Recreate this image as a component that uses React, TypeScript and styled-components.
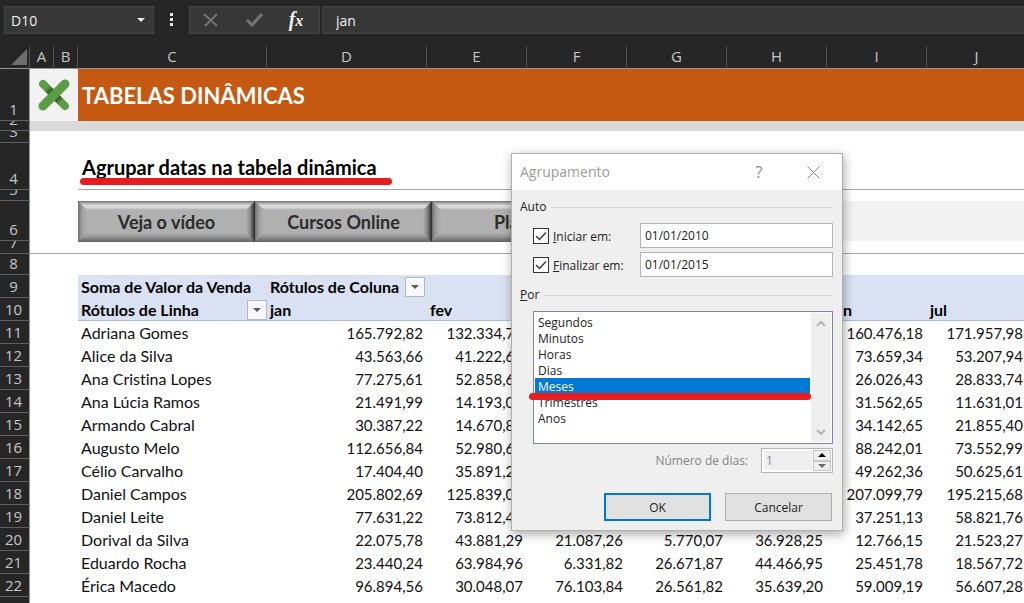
import React, { useState } from "react";
import styled, { createGlobalStyle, css } from "styled-components";

const GlobalStyle = createGlobalStyle`
  *, *::before, *::after { box-sizing: border-box; }
  html, body, #root { height: 100%; }
  body {
    margin: 0;
    overflow: hidden;
    background: #ffffff;
    font-family: Lato, "Liberation Sans", sans-serif;
    font-variant-ligatures: none;
  }
  button, input, select { font: inherit; color: inherit; margin: 0; border-radius: 0; }
`;

const uiFont = css`font-family: "Open Sans", "Noto Sans", sans-serif;`;

const Screen = styled.div`
  position: relative;
  height: 100%;
  overflow: hidden;
  display: flex;
  flex-direction: column;
`;

const FormulaBar = styled.header`
  ${uiFont}
  flex: none;
  display: flex;
  align-items: center;
  height: 46px;
  padding: 6px 0 12px 4px;
  background: #262626;
  color: #f0f0f0;
  font-size: 14px;
`;

const BarBox = styled.div<{ $width?: number }>`
  display: flex;
  align-items: center;
  height: 28px;
  background: #373737;
  border: 1px solid #444444;
  ${(p) => (p.$width ? `width: ${p.$width}px; flex: none;` : "flex: 1; border-right: 0; margin-left: 2px;")}
`;

const BarInput = styled.input`
  flex: 1;
  min-width: 0;
  padding: 0 6px;
  border: 0;
  outline: 0;
  background: transparent;
`;

const FormulaInput = styled(BarInput)`
  padding: 0 13px;
`;

const BarButton = styled.button<{ $width: number }>`
  display: flex;
  align-items: center;
  justify-content: center;
  width: ${(p) => p.$width}px;
  height: 26px;
  padding: 0;
  border: 0;
  background: transparent;
`;

const FxMark = styled.span`
  font-family: "Liberation Serif", serif;
  font-size: 20px;
  font-style: italic;
  font-weight: 700;
  line-height: 24px;

  small { font-size: 16px; }
`;

const Dots = styled.div`
  display: flex;
  flex: none;
  justify-content: center;
  width: 35px;
`;

const SheetTable = styled.table`
  flex: none;
  width: 100%;
  min-width: 1027px;
  table-layout: fixed;
  border-collapse: separate;
  border-spacing: 0;
  color: #111111;
  font-size: 15px;

  th, td { padding: 0; }
`;

const ColHead = styled.th`
  ${uiFont}
  height: 23px;
  background: #262626;
  border-right: 1px solid #505050;
  border-bottom: 1px solid #969696;
  color: #c6c6c6;
  font-size: 15px;
  font-weight: 400;
  line-height: 20px;
  vertical-align: top;
`;

const Corner = styled(ColHead)`
  vertical-align: middle;
  svg { display: block; margin-left: 11px; }
`;

const RowHead = styled.th`
  ${uiFont}
  background: #262626;
  border-right: 1px solid #969696;
  border-bottom: 1px solid #606060;
  color: #c6c6c6;
  font-size: 15px;
  font-weight: 400;
`;

const RowNumber = styled.div<{ $height: number }>`
  display: flex;
  align-items: flex-end;
  justify-content: center;
  height: ${(p) => p.$height - 1}px;
  padding-right: 2px;
  line-height: 22px;
  overflow: hidden;
`;

const Cell = styled.td<{ $line?: boolean; $fill?: string }>`
  background: ${(p) => p.$fill || "#ffffff"};
  ${(p) => p.$line && "border-bottom: 1px solid #a6a6a6;"}
`;

const LogoCell = styled(Cell)`
  svg { display: block; margin: 0 auto; }
`;

const Title = styled.h1`
  margin: 0;
  padding: 2px 4px 0;
  color: #ffffff;
  font-size: 22px;
  line-height: 28px;
`;

const Subtitle = styled.h2`
  display: inline-block;
  position: relative;
  margin: 0;
  padding: 2px 4px 0;
  color: #000000;
  font-size: 20px;
  line-height: 24px;
  white-space: nowrap;
`;

const Marker = styled.span<{ $left: number; $right: number; $top: number }>`
  position: absolute;
  left: ${(p) => p.$left}px;
  right: ${(p) => p.$right}px;
  top: ${(p) => p.$top}px;
  height: 7px;
  border-radius: 4px;
  background: #e81c1c;
  pointer-events: none;
`;

const ButtonStrip = styled.nav`
  display: flex;
  height: 40px;
`;

const BevelLink = styled.a`
  position: relative;
  display: flex;
  align-items: center;
  justify-content: center;
  flex: none;
  width: 177px;
  height: 41px;
  background: linear-gradient(
    to right,
    #6c6c6c 0,
    #8c8c8c 2px,
    #a4a4a4 5px,
    #b0b0b0 9px,
    #b0b0b0 calc(100% - 9px),
    #8c8c8c calc(100% - 5px),
    #3a3a3a calc(100% - 1px),
    #2a2a2a 100%
  );
  color: #2b2b2b;
  font-size: 18px;
  font-weight: 700;
  line-height: 24px;
  text-decoration: none;

  &::before,
  &::after {
    content: "";
    position: absolute;
    left: 0;
    right: 0;
    height: 9px;
  }
  &::before {
    top: 0;
    background: linear-gradient(#6e6e6e 0, #a8a8a8 2px, #e2e2e2 5px, #d0d0d0 7px, #b0b0b0 9px);
    clip-path: polygon(0 0, 100% 0, calc(100% - 9px) 100%, 9px 100%);
  }
  &::after {
    bottom: 0;
    background: linear-gradient(#b0b0b0 0, #929292 4px, #6c6c6c 8px, #5c5c5c 9px);
    clip-path: polygon(9px 0, calc(100% - 9px) 0, 100% 100%, 0 100%);
  }
`;

const PivotHead = styled.th<{ $last?: boolean }>`
  height: 23px;
  background: #d9e1f2;
  ${(p) => p.$last && "border-bottom: 1px solid #a9bbe0;"}
  color: #000000;
  font-size: 16px;
  font-weight: 700;
  text-align: left;
`;

const PivotLabel = styled.div`
  display: flex;
  align-items: center;
  height: 22px;
  padding: 1px 0 0 3px;
  line-height: 22px;
  white-space: nowrap;
`;

const FilterButton = styled.button<{ $end?: boolean }>`
  display: flex;
  align-items: center;
  justify-content: center;
  width: 20px;
  height: 20px;
  padding: 0;
  margin-left: ${(p) => (p.$end ? "auto" : "6px")};
  border: 1px solid #b4b8c0;
  background: #f8f9fb;
`;

const NameCell = styled.th`
  height: 23px;
  padding-left: 3px !important;
  font-size: 16px;
  font-weight: 400;
  text-align: left;
  line-height: 22px;
  white-space: nowrap;
`;

const NumberCell = styled.td`
  height: 23px;
  padding-right: 4px !important;
  text-align: right;
  line-height: 22px;
`;

const Dialog = styled.form`
  ${uiFont}
  position: absolute;
  left: 511px;
  top: 153px;
  width: 332px;
  border: 1px solid #b0b0b0;
  background: #efefef;
  box-shadow: 1px 3px 10px rgba(0, 0, 0, 0.35);
  color: #222222;
  font-size: 12px;
  line-height: 16px;
`;

const DialogBar = styled.div`
  display: flex;
  align-items: center;
  height: 36px;
  padding: 0 9px 0 8px;
  background: #ffffff;
  color: #9c9c9c;
  font-size: 14px;
`;

const DialogTitle = styled.span`
  flex: 1;
`;

const BarIcon = styled.button`
  display: flex;
  align-items: center;
  justify-content: center;
  width: 40px;
  height: 30px;
  padding: 0;
  margin-left: 14px;
  border: 0;
  background: transparent;
  color: #8c8c8c;
  font-size: 16px;
`;

const DialogBody = styled.div`
  padding: 9px 9px 9px 8px;
`;

const GroupTitle = styled.div`
  display: flex;
  align-items: center;
  gap: 5px;
  height: 16px;

  &::after { content: ""; flex: 1; height: 1px; background: #d8d8d8; }
`;

const Fields = styled.div`
  display: flex;
  flex-direction: column;
  gap: 4px;
  padding: 8px 0 10px 13px;
`;

const Field = styled.div`
  display: flex;
  align-items: center;
  height: 25px;
`;

const CheckBox = styled.span`
  position: relative;
  display: flex;
  flex: none;
  width: 16px;
  height: 16px;

  input {
    appearance: none;
    width: 16px;
    height: 16px;
    border: 1px solid #333333;
    background: #ffffff;
  }
  svg { position: absolute; inset: 0; pointer-events: none; visibility: hidden; }
  input:checked + svg { visibility: visible; }
`;

const FieldLabel = styled.label`
  flex: 1;
  padding: 2px 0 0 4px;
`;

const TextBox = styled.input`
  width: 193px;
  height: 25px;
  padding: 0 4px;
  border: 1px solid #b4b4ba;
  background: #ffffff;
  outline: 0;
`;

const ListFrame = styled.div`
  position: relative;
  display: flex;
  height: 133px;
  margin: 8px 0 4px 13px;
  border: 1px solid #82869a;
  background: #ffffff;
`;

const List = styled.select`
  flex: 1;
  min-width: 0;
  padding: 2px 0 0 1px;
  border: 0;
  outline: 0;
  background: #ffffff;
  overflow: hidden;
  scrollbar-width: none;

  option {
    height: 16px;
    min-height: 16px;
    padding: 0 3px;
    color: #222222;
    line-height: 16px;
  }
  option:checked {
    background: #0078d7 linear-gradient(#0078d7, #0078d7);
    color: #ffffff;
    -webkit-text-fill-color: #ffffff;
  }
`;

const ScrollTrack = styled.div`
  display: flex;
  flex-direction: column;
  justify-content: space-between;
  width: 20px;
  margin: 1px;
  padding: 2px 0;
  background: #efefef;
`;

const ArrowButton = styled.button`
  display: flex;
  align-items: center;
  justify-content: center;
  height: 16px;
  padding: 0;
  border: 0;
  background: transparent;
`;

const DaysRow = styled.div`
  display: flex;
  align-items: center;
  justify-content: flex-end;
  gap: 13px;
  height: 25px;
  color: #838383;
`;

const Spin = styled.div`
  display: flex;
  width: 72px;
  height: 25px;
  padding: 1px;
  border: 1px solid #b4b4ba;
  background: #ffffff;
`;

const SpinInput = styled.input`
  flex: 1;
  min-width: 0;
  margin: 1px !important;
  padding: 0 2px;
  border: 0;
  background: #efefef;
  color: #838383;
`;

const SpinButtons = styled.div`
  display: flex;
  flex-direction: column;
  width: 18px;
`;

const SpinButton = styled.button`
  display: flex;
  align-items: center;
  justify-content: center;
  flex: 1;
  padding: 0;
  border: 1px solid #c8c8c8;
  background: #efefef;
`;

const Actions = styled.div`
  display: flex;
  justify-content: flex-end;
  gap: 14px;
  padding: 20px 1px 0 0;
`;

const ActionButton = styled.button<{ $primary?: boolean }>`
  width: 107px;
  height: 28px;
  padding: 2px 0 0;
  border: ${(p) => (p.$primary ? "2px solid #0078d7" : "1px solid #adadad")};
  background: #e1e1e1;
`;

const columns = ["A", "B", "C", "D", "E", "F", "G", "H", "I", "J"];
const widths = [30, 24, 24, 189, 160, 100, 100, 100, 100, 100, 100];

const people: [string, string[]][] = [
  ["Adriana Gomes", ["165.792,82", "132.334,70", "", "", "", "160.476,18", "171.957,98"]],
  ["Alice da Silva", ["43.563,66", "41.222,60", "", "", "", "73.659,34", "53.207,94"]],
  ["Ana Cristina Lopes", ["77.275,61", "52.858,60", "", "", "", "26.026,43", "28.833,74"]],
  ["Ana Lúcia Ramos", ["21.491,99", "14.193,00", "", "", "", "31.562,65", "11.631,01"]],
  ["Armando Cabral", ["30.387,22", "14.670,80", "", "", "", "34.142,65", "21.855,40"]],
  ["Augusto Melo", ["112.656,84", "52.980,60", "", "", "", "88.242,01", "73.552,99"]],
  ["Célio Carvalho", ["17.404,40", "35.891,20", "", "", "", "49.262,36", "50.625,61"]],
  ["Daniel Campos", ["205.802,69", "125.839,00", "", "", "", "207.099,79", "195.215,68"]],
  ["Daniel Leite", ["77.631,22", "73.812,40", "", "", "", "37.251,13", "58.821,76"]],
  ["Dorival da Silva", ["22.075,78", "43.881,29", "21.087,26", "5.770,07", "36.928,25", "12.766,15", "21.523,27"]],
  ["Eduardo Rocha", ["23.440,24", "63.984,96", "6.331,82", "26.671,87", "44.466,95", "25.451,78", "18.567,72"]],
  ["Érica Macedo", ["96.894,56", "30.048,07", "76.103,84", "26.561,82", "35.639,20", "59.009,19", "56.607,28"]],
  ["Evaristo Melo", []],
];

const periods = ["Segundos", "Minutos", "Horas", "Dias", "Meses", "Trimestres", "Anos"];

const Triangle = ({ color, up, size = 8 }: { color: string; up?: boolean; size?: number }) => (
  <svg width={size} height={size / 2} viewBox="0 0 8 4" aria-hidden="true">
    <path d={up ? "M0 4h8L4 0z" : "M0 0h8L4 4z"} fill={color} />
  </svg>
);

const Chevron = ({ up }: { up?: boolean }) => (
  <svg width="10" height="7" viewBox="0 0 10 7" fill="none" stroke="#b4b4b4" strokeWidth="2" aria-hidden="true">
    <path d={up ? "M1 6l4-4 4 4" : "M1 1l4 4 4-4"} />
  </svg>
);

const Logo = () => (
  <svg width="32" height="32" viewBox="0 0 32 32" fill="none" strokeLinecap="round" strokeWidth="8" aria-hidden="true">
    <defs>
      <linearGradient id="fold" gradientUnits="userSpaceOnUse" x1="4" y1="4" x2="28" y2="28">
        <stop offset="0.2" stopColor="#5b9c45" />
        <stop offset="0.42" stopColor="#26401c" />
        <stop offset="0.58" stopColor="#26401c" />
        <stop offset="0.8" stopColor="#5b9c45" />
      </linearGradient>
    </defs>
    <path d="M5 5L27 27" stroke="url(#fold)" />
    <path d="M27 5L5 27" stroke="#5b9c45" strokeWidth="9" />
  </svg>
);

const Tick = ({ id }: { id: string }) => (
  <CheckBox>
    <input type="checkbox" id={id} defaultChecked />
    <svg width="16" height="16" fill="none" stroke="#3c3c3c" strokeWidth="1.5" aria-hidden="true">
      <path d="M3 8l3.500 3.500L13 4.500" />
    </svg>
  </CheckBox>
);

const Head = ({ n, h }: { n: number; h: number }) => (
  <RowHead scope="row">
    <RowNumber $height={h}>{n}</RowNumber>
  </RowHead>
);

export default function App() {
  const [period, setPeriod] = useState("Meses");
  return (
    <Screen>
      <GlobalStyle />
      <FormulaBar>
        <BarBox $width={150}>
          <BarInput aria-label="Caixa de nome" defaultValue="D10" />
          <BarButton $width={24} aria-label="Abrir nomes">
            <Triangle color="#f0f0f0" />
          </BarButton>
        </BarBox>
        <Dots>
          <svg width="3" height="14" fill="#e6e6e6" aria-hidden="true">
            <path d="M0 0h3v3H0zM0 5h3v3H0zM0 10h3v3H0z" />
          </svg>
        </Dots>
        <BarBox $width={131}>
          <BarButton $width={42} aria-label="Cancelar edição">
            <svg width="16" height="14" viewBox="0 0 16 14" stroke="#747474" strokeWidth="2" fill="none">
              <path d="M1 1l13 12M14 1L2 13" />
            </svg>
          </BarButton>
          <BarButton $width={44} aria-label="Inserir">
            <svg width="17" height="14" viewBox="0 0 17 14" stroke="#747474" strokeWidth="3" fill="none">
              <path d="M1 7l5 5L16 1" />
            </svg>
          </BarButton>
          <BarButton $width={40} aria-label="Inserir função">
            <FxMark>f<small>x</small></FxMark>
          </BarButton>
        </BarBox>
        <BarBox>
          <FormulaInput aria-label="Barra de fórmulas" defaultValue="jan" />
        </BarBox>
      </FormulaBar>

      <SheetTable>
        <colgroup>
          {widths.map((w, i) => (
            <col key={i} width={w} />
          ))}
          <col />
        </colgroup>
        <thead>
          <tr>
            <Corner aria-label="Selecionar tudo">
              <svg width="16" height="16" aria-hidden="true">
                <path d="M16 0v16H0z" fill="#6e6e6e" />
              </svg>
            </Corner>
            {columns.map((c) => (
              <ColHead key={c} scope="col">{c}</ColHead>
            ))}
            <ColHead />
          </tr>
        </thead>
        <tbody>
          <tr>
            <Head n={1} h={52} />
            <LogoCell colSpan={2} $fill="#f2f2f2"><Logo /></LogoCell>
            <Cell colSpan={9} $fill="#c55911"><Title>TABELAS DINÂMICAS</Title></Cell>
          </tr>
          <tr>
            <Head n={2} h={10} />
            <Cell colSpan={11} $fill="#d9d9d9" />
          </tr>
          <tr>
            <Head n={3} h={12} />
            <Cell colSpan={11} />
          </tr>
          <tr>
            <Head n={4} h={47} />
            <Cell colSpan={2} />
            <Cell colSpan={9} $line>
              <Subtitle>
                Agrupar datas na tabela dinâmica
                <Marker $left={2} $right={-11} $top={25} />
              </Subtitle>
            </Cell>
          </tr>
          <tr>
            <Head n={5} h={11} />
            <Cell colSpan={11} />
          </tr>
          <tr>
            <Head n={6} h={40} />
            <Cell colSpan={2} />
            <Cell colSpan={9} $fill="#f2f2f2">
              <ButtonStrip>
                <BevelLink href="#video">Veja o vídeo</BevelLink>
                <BevelLink href="#cursos">Cursos Online</BevelLink>
                <BevelLink href="#planos">Planos</BevelLink>
              </ButtonStrip>
            </Cell>
          </tr>
          <tr>
            <Head n={7} h={13} />
            <Cell colSpan={11} $line />
          </tr>
          <tr>
            <Head n={8} h={21} />
            <Cell colSpan={11} />
          </tr>
          <tr>
            <Head n={9} h={23} />
            <Cell colSpan={2} />
            <PivotHead><PivotLabel>Soma de Valor da Venda</PivotLabel></PivotHead>
            <PivotHead colSpan={8}>
              <PivotLabel>
                Rótulos de Coluna
                <FilterButton aria-label="Filtrar colunas"><Triangle color="#5a5a5a" /></FilterButton>
              </PivotLabel>
            </PivotHead>
          </tr>
          <tr>
            <Head n={10} h={23} />
            <Cell colSpan={2} />
            <PivotHead $last>
              <PivotLabel>
                Rótulos de Linha
                <FilterButton $end aria-label="Filtrar linhas"><Triangle color="#5a5a5a" /></FilterButton>
              </PivotLabel>
            </PivotHead>
            {["jan", "fev", "mar", "abr", "mai", "jun", "jul", ""].map((m) => (
              <PivotHead $last key={m}><PivotLabel>{m}</PivotLabel></PivotHead>
            ))}
          </tr>
          {people.map(([name, values], i) => (
            <tr key={name}>
              <Head n={i + 11} h={23} />
              <Cell colSpan={2} />
              <NameCell scope="row">{name}</NameCell>
              {values.map((v, j) => (
                <NumberCell key={j}>{v}</NumberCell>
              ))}
            </tr>
          ))}
        </tbody>
      </SheetTable>

      <Dialog role="dialog" aria-label="Agrupamento" onSubmit={(e) => e.preventDefault()}>
        <DialogBar>
          <DialogTitle>Agrupamento</DialogTitle>
          <BarIcon type="button" aria-label="Ajuda">?</BarIcon>
          <BarIcon type="button" aria-label="Fechar">
            <svg width="13" height="13" stroke="#8c8c8c" aria-hidden="true">
              <path d="M0.500 0.500l12 12M12.500 0.500l-12 12" />
            </svg>
          </BarIcon>
        </DialogBar>
        <DialogBody>
          <GroupTitle>Auto</GroupTitle>
          <Fields>
            <Field>
              <Tick id="start-on" />
              <FieldLabel htmlFor="start-on"><u>I</u>niciar em:</FieldLabel>
              <TextBox aria-label="Iniciar em" defaultValue="01/01/2010" />
            </Field>
            <Field>
              <Tick id="end-on" />
              <FieldLabel htmlFor="end-on"><u>F</u>inalizar em:</FieldLabel>
              <TextBox aria-label="Finalizar em" defaultValue="01/01/2015" />
            </Field>
          </Fields>
          <GroupTitle as="label" htmlFor="period"><span><u>P</u>or</span></GroupTitle>
          <ListFrame>
            <List id="period" size={8} value={period} onChange={(e) => setPeriod(e.target.value)}>
              {periods.map((p) => (
                <option key={p}>{p}</option>
              ))}
            </List>
            <ScrollTrack>
              <ArrowButton type="button" aria-label="Rolar para cima"><Chevron up /></ArrowButton>
              <ArrowButton type="button" aria-label="Rolar para baixo"><Chevron /></ArrowButton>
            </ScrollTrack>
            <Marker $left={-5} $right={21} $top={81} />
          </ListFrame>
          <DaysRow>
            <label htmlFor="days">Número de dias:</label>
            <Spin>
              <SpinInput id="days" defaultValue="1" disabled />
              <SpinButtons>
                <SpinButton type="button" aria-label="Aumentar"><Triangle up color="#000000" /></SpinButton>
                <SpinButton type="button" aria-label="Diminuir"><Triangle color="#6a6a6a" /></SpinButton>
              </SpinButtons>
            </Spin>
          </DaysRow>
          <Actions>
            <ActionButton $primary type="submit">OK</ActionButton>
            <ActionButton type="button">Cancelar</ActionButton>
          </Actions>
        </DialogBody>
      </Dialog>
    </Screen>
  );
}
